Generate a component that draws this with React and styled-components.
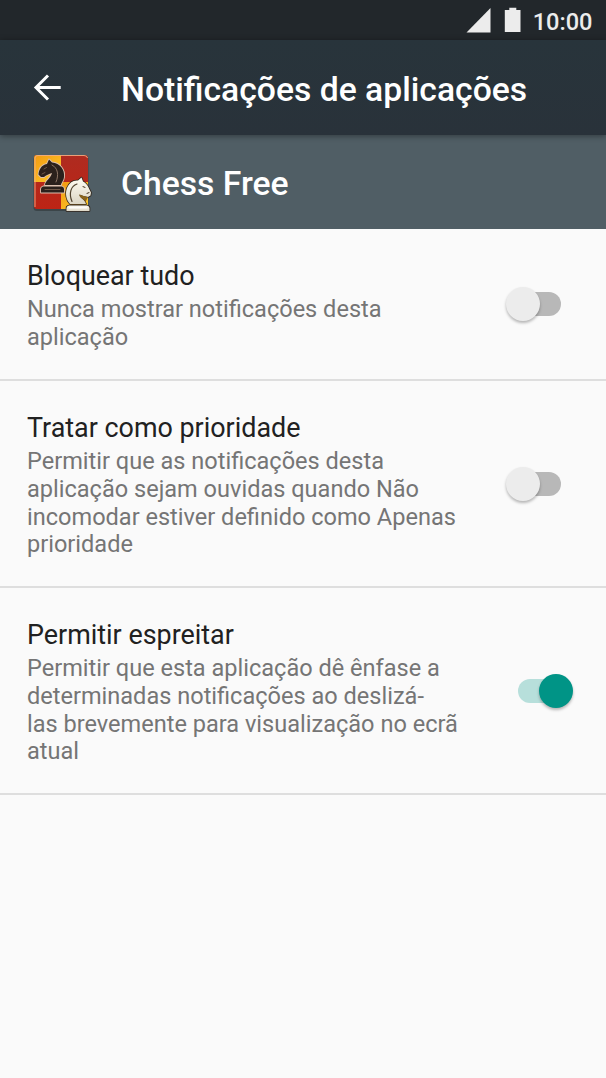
import React, { useState } from "react";
import styled, { createGlobalStyle } from "styled-components";

const GlobalStyle = createGlobalStyle`
  * { box-sizing: border-box; }
  html, body { margin: 0; padding: 0; background: #fafafa; }
  body { font-family: Roboto, "Noto Sans", sans-serif; overflow: hidden; }
`;

const Screen = styled.div`
  width: 606px;
  height: 1078px;
  display: flex;
  flex-direction: column;
  background: #fafafa;
`;

const StatusBar = styled.div`
  height: 40px;
  flex: none;
  display: flex;
  align-items: center;
  justify-content: flex-end;
  padding: 3px 13.5px 0 0;
  background: #22272b;
  color: #ececec;
`;

const StatusIcons = styled.svg`
  width: 56px;
  height: 26px;
  margin-right: 10.5px;
  margin-top: -4px;
`;

const Clock = styled.span`
  font-size: 23.6px;
  font-weight: 500;
  line-height: 28px;
`;

const Toolbar = styled.header`
  position: relative;
  height: 95px;
  flex: none;
  display: flex;
  align-items: center;
  padding-left: 33px;
  background: linear-gradient(#28343b, #29323a);
  box-shadow: 0 1px 6px rgba(0, 0, 0, 0.4);
`;

const BackButton = styled.button`
  width: 88px;
  height: 48px;
  padding: 0;
  border: 0;
  background: none;
  display: flex;
  align-items: center;
  svg { display: block; }
`;

const Title = styled.h1`
  margin: 0;
  padding-top: 4px;
  font-size: 33.7px;
  line-height: 40px;
  font-weight: 500;
  color: #fff;
  white-space: nowrap;
`;

const AppHeader = styled.div`
  height: 94px;
  flex: none;
  display: flex;
  align-items: center;
  padding-left: 27px;
  background: #505e65;
`;

const AppIcon = styled.svg`
  width: 70px;
  height: 70px;
  margin-right: 24px;
`;

const Row = styled.section`
  height: ${(p) => p.$height}px;
  display: flex;
  align-items: center;
  justify-content: space-between;
  padding: 0 33px 0 27px;
  border-bottom: 2px solid #dedede;
`;

const RowText = styled.div`
  align-self: flex-start;
  padding-top: 31px;
`;

const RowTitle = styled.h2`
  margin: 0 0 4px;
  font-size: 26.9px;
  line-height: 32px;
  font-weight: 400;
  color: #212121;
`;

const Summary = styled.p`
  margin: 0;
  font-size: 23.55px;
  line-height: 27.8px;
  color: #757575;
  white-space: pre;
`;

const Switch = styled.button`
  width: 68px;
  height: 36px;
  padding: 0 ${(p) => (p.$on ? 0 : 12.5)}px 0 0;
  border: 0;
  background: none;
  display: flex;
  align-items: center;
  justify-content: flex-end;
`;

const Track = styled.span`
  width: 55px;
  height: 24px;
  flex: none;
  display: flex;
  align-items: center;
  justify-content: ${(p) => (p.$on ? "flex-end" : "flex-start")};
  border-radius: 12px;
  background: linear-gradient(${(p) => (p.$on ? "#b7dfdb, #b7dfdb" : "#b8b8b8, #b8b8b8")})
    ${(p) => (p.$on ? "left" : "right")} / 40px 24px no-repeat;
`;

const Thumb = styled.span`
  width: 34px;
  height: 34px;
  flex: none;
  border-radius: 50%;
  background: ${(p) => (p.$on ? "#009486" : "#ececec")};
  box-shadow: 0 2px 3px rgba(0, 0, 0, 0.28);
`;

const settings = [
  {
    title: "Bloquear tudo",
    summary: "Nunca mostrar notificações desta\naplicação",
    height: 152,
    on: false,
  },
  {
    title: "Tratar como prioridade",
    summary:
      "Permitir que as notificações desta\naplicação sejam ouvidas quando Não\nincomodar estiver definido como Apenas\nprioridade",
    height: 207,
    on: false,
  },
  {
    title: "Permitir espreitar",
    summary:
      "Permitir que esta aplicação dê ênfase a\ndeterminadas notificações ao deslizá-\nlas brevemente para visualização no ecrã\natual",
    height: 207,
    on: true,
  },
];

function ChessIcon() {
  return (
    <AppIcon viewBox="0 0 70 70">
      <defs>
        <linearGradient id="gold" x1="0" y1="0" x2="1" y2="1">
          <stop offset="0" stopColor="#f39a12" />
          <stop offset="1" stopColor="#ffcc2c" />
        </linearGradient>
        <linearGradient id="red" x1="0" y1="0" x2="0" y2="1">
          <stop offset="0" stopColor="#ae2b20" />
          <stop offset="1" stopColor="#bd2415" />
        </linearGradient>
        <linearGradient id="ivory" x1="0" y1="0" x2="0" y2="1">
          <stop offset="0" stopColor="#fffdf2" />
          <stop offset="1" stopColor="#dcd6c5" />
        </linearGradient>
        <clipPath id="board">
          <rect x="7" y="8" width="54" height="54" rx="3" />
        </clipPath>
      </defs>
      <rect x="6.5" y="9" width="55" height="55" rx="3.5" fill="#30383b" opacity="0.65" />
      <g clipPath="url(#board)">
        <rect x="7" y="8" width="54" height="54" fill="url(#red)" />
        <rect x="7" y="8" width="27" height="27" fill="url(#gold)" />
        <rect x="34" y="35" width="27" height="27" fill="url(#gold)" />
      </g>
      <path d="M8 60 V11 Q8 8.5 11 8.5 H57 Q60 8.5 60.5 11" fill="none" stroke="#f0ad83" strokeWidth="0.9" />
      <g stroke="#dcc0ae" strokeWidth="1.8" strokeLinejoin="round" fill="#2b211c" paintOrder="stroke">
        <path d="M18 38 C18 34 24 31 25 26 C22 27 19 28 17 30 L14 30 L11.5 27.5 C12 23 14 18 20 17 L22 12.5 L25 15.5 C33 16 38 23 37 30 C36.5 34 34 36 34 38 Z" />
        <path d="M16 39.5 H35 Q37 40 37 42 V45.5 H14 V42 Q14 40 16 39.5 Z" />
      </g>
      <path d="M25 18 C31 21 32 28 29 35" fill="none" stroke="#8c7464" strokeWidth="1" strokeLinecap="round" />
      <path d="M17 22 L19.5 20.5 M15 27 L18 25.5 M18 42.5 H33" fill="none" stroke="#705848" strokeWidth="1" strokeLinecap="round" />
      <g stroke="#30251b" strokeWidth="1.6" strokeLinejoin="round" fill="url(#ivory)" paintOrder="stroke">
        <path d="M43 57 C39 53 38 46 40 41 C42 36 46 33 51 33.5 L54.5 30.5 L56 34.5 C61 37 61.5 41 64 45.5 L63.5 48.5 L61 50 C58 49.5 55 48.5 52.5 47.5 C52 51 58 52 59 57 Z" />
        <path d="M42 58.5 H60 Q62.5 59 62.5 61 V64 H39.5 V61 Q39.5 59 42 58.5 Z" />
      </g>
      <path d="M50 37 C44 39 41.5 46 45 54.5" fill="none" stroke="#51442f" strokeWidth="1.2" strokeLinecap="round" />
      <path d="M56 39.5 L58 40.5 M60 46.5 L62 45.5" stroke="#62533f" strokeWidth="1.1" strokeLinecap="round" />
      <path d="M52.5 47.5 C52 51 57 51.5 58.5 55 L61 50 C58 49.5 55 48.5 52.5 47.5 Z" fill="#8a641c" />
      <path d="M42 60.8 H60" stroke="#fff" strokeWidth="1.2" />
    </AppIcon>
  );
}

function Setting({ title, summary, height, on }) {
  const [checked, setChecked] = useState(on);
  return (
    <Row $height={height}>
      <RowText>
        <RowTitle>{title}</RowTitle>
        <Summary>{summary}</Summary>
      </RowText>
      <Switch
        $on={checked}
        role="switch"
        aria-checked={checked}
        aria-label={title}
        onClick={() => setChecked(!checked)}
      >
        <Track $on={checked}>
          <Thumb $on={checked} />
        </Track>
      </Switch>
    </Row>
  );
}

export default function App() {
  return (
    <>
      <GlobalStyle />
      <Screen>
        <StatusBar>
          <StatusIcons viewBox="0 0 56 26" fill="#ececec">
            <path d="M0.5 25.5 L24.5 1 V25.5 Z" />
            <path d="M43.3 0.8 H50.3 V3 H54.5 V25 H38.8 V3 H43.3 Z" />
          </StatusIcons>
          <Clock>10:00</Clock>
        </StatusBar>
        <Toolbar>
          <BackButton aria-label="Voltar">
            <svg width="30" height="28" viewBox="0 0 30 28" fill="none" stroke="#fff" strokeWidth="3">
              <path d="M27.7 13.5 H3.5 M15 1.5 L3 13.5 L15 25.5" />
            </svg>
          </BackButton>
          <Title>Notificações de aplicações</Title>
        </Toolbar>
        <AppHeader>
          <ChessIcon />
          <Title as="h2">Chess Free</Title>
        </AppHeader>
        {settings.map((item) => (
          <Setting key={item.title} {...item} />
        ))}
      </Screen>
    </>
  );
}
